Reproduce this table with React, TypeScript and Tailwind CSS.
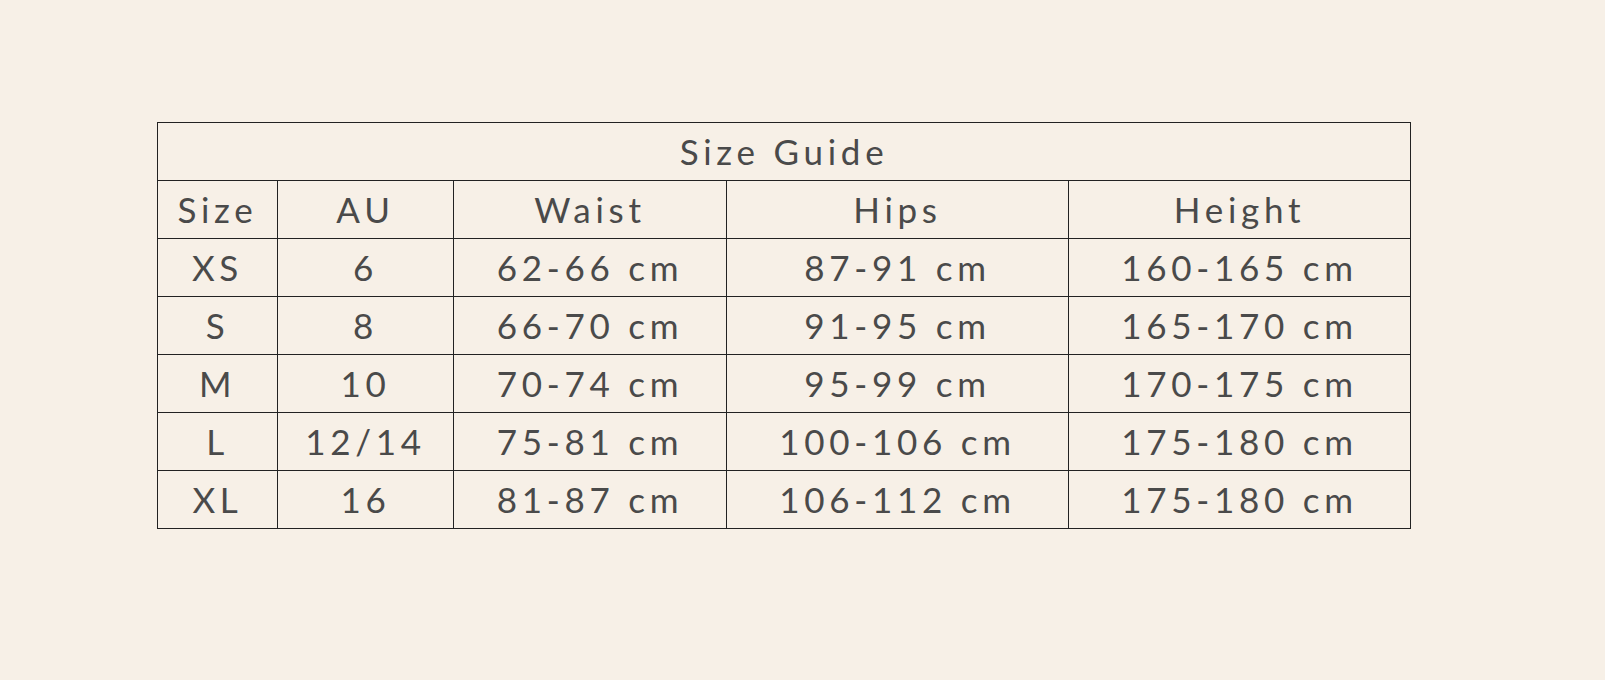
import React from "react";

const rows = [
  ["XS", "6", "62-66 cm", "87-91 cm", "160-165 cm"],
  ["S", "8", "66-70 cm", "91-95 cm", "165-170 cm"],
  ["M", "10", "70-74 cm", "95-99 cm", "170-175 cm"],
  ["L", "12/14", "75-81 cm", "100-106 cm", "175-180 cm"],
  ["XL", "16", "81-87 cm", "106-112 cm", "175-180 cm"],
];

const headers = ["Size", "AU", "Waist", "Hips", "Height"];

const cell = "border border-[#222] h-[58px] p-0 text-center align-middle font-normal";

export default function App() {
  return (
    <div
      className="w-full h-[680px] bg-[#f7f0e7] pt-[122px] pl-[157px] text-[#4a4a4a]"
      style={{ fontFamily: "Lato, 'Open Sans', sans-serif" }}
    >
      <table className="table-fixed border-collapse w-[1253px] text-[35px] tracking-[0.135em] leading-none">
        <colgroup>
          <col className="w-[120px]" />
          <col className="w-[176px]" />
          <col className="w-[273px]" />
          <col className="w-[342px]" />
          <col className="w-[342px]" />
        </colgroup>
        <thead>
          <tr>
            <th colSpan={5} className={cell}>
              Size Guide
            </th>
          </tr>
          <tr>
            {headers.map((h) => (
              <th key={h} className={cell}>
                {h}
              </th>
            ))}
          </tr>
        </thead>
        <tbody>
          {rows.map((r) => (
            <tr key={r[0]}>
              {r.map((v, i) => (
                <td key={i} className={cell}>
                  {v}
                </td>
              ))}
            </tr>
          ))}
        </tbody>
      </table>
    </div>
  );
}
